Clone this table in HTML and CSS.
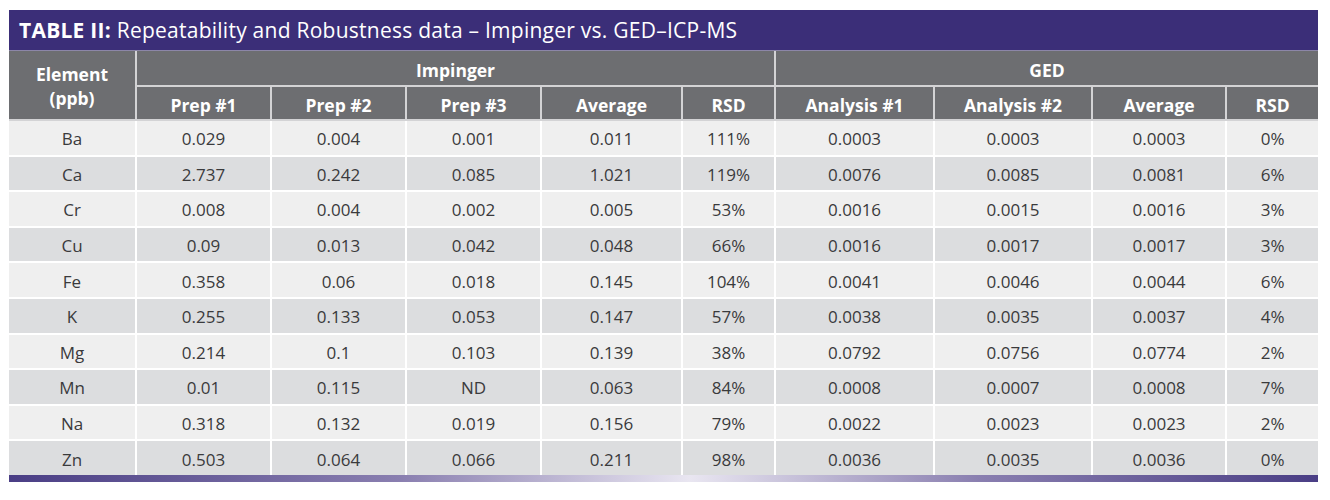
FILE: index.html
```html
<!DOCTYPE html>
<html>
<head>
<meta charset="utf-8">
<link rel="stylesheet" href="styles.css">
</head>
<body>
<div class="wrap">
  <div class="title"><b>TABLE II:</b> Repeatability and Robustness data – Impinger vs. GED–ICP-MS</div>
  <table class="data">
    <colgroup>
      <col class="c-el"><col class="c-p"><col class="c-p"><col class="c-p"><col class="c-avg"><col class="c-rsd">
      <col class="c-an"><col class="c-an2"><col class="c-avg2"><col class="c-rsd2">
    </colgroup>
    <thead>
      <tr class="h1">
        <th rowspan="2" class="el">Element<br>(ppb)</th>
        <th colspan="5">Impinger</th>
        <th colspan="4">GED</th>
      </tr>
      <tr class="h2">
        <th>Prep #1</th><th>Prep #2</th><th>Prep #3</th><th>Average</th><th>RSD</th>
        <th>Analysis #1</th><th>Analysis #2</th><th>Average</th><th>RSD</th>
      </tr>
    </thead>
    <tbody>
      <tr><td>Ba</td><td>0.029</td><td>0.004</td><td>0.001</td><td>0.011</td><td>111%</td><td>0.0003</td><td>0.0003</td><td>0.0003</td><td>0%</td></tr>
      <tr><td>Ca</td><td>2.737</td><td>0.242</td><td>0.085</td><td>1.021</td><td>119%</td><td>0.0076</td><td>0.0085</td><td>0.0081</td><td>6%</td></tr>
      <tr><td>Cr</td><td>0.008</td><td>0.004</td><td>0.002</td><td>0.005</td><td>53%</td><td>0.0016</td><td>0.0015</td><td>0.0016</td><td>3%</td></tr>
      <tr><td>Cu</td><td>0.09</td><td>0.013</td><td>0.042</td><td>0.048</td><td>66%</td><td>0.0016</td><td>0.0017</td><td>0.0017</td><td>3%</td></tr>
      <tr><td>Fe</td><td>0.358</td><td>0.06</td><td>0.018</td><td>0.145</td><td>104%</td><td>0.0041</td><td>0.0046</td><td>0.0044</td><td>6%</td></tr>
      <tr><td>K</td><td>0.255</td><td>0.133</td><td>0.053</td><td>0.147</td><td>57%</td><td>0.0038</td><td>0.0035</td><td>0.0037</td><td>4%</td></tr>
      <tr><td>Mg</td><td>0.214</td><td>0.1</td><td>0.103</td><td>0.139</td><td>38%</td><td>0.0792</td><td>0.0756</td><td>0.0774</td><td>2%</td></tr>
      <tr><td>Mn</td><td>0.01</td><td>0.115</td><td>ND</td><td>0.063</td><td>84%</td><td>0.0008</td><td>0.0007</td><td>0.0008</td><td>7%</td></tr>
      <tr><td>Na</td><td>0.318</td><td>0.132</td><td>0.019</td><td>0.156</td><td>79%</td><td>0.0022</td><td>0.0023</td><td>0.0023</td><td>2%</td></tr>
      <tr><td>Zn</td><td>0.503</td><td>0.064</td><td>0.066</td><td>0.211</td><td>98%</td><td>0.0036</td><td>0.0035</td><td>0.0036</td><td>0%</td></tr>
    </tbody>
  </table>
  <div class="footbar"></div>
</div>
</body>
</html>
```

FILE: styles.css
```css
html, body {
  margin: 0;
  padding: 0;
  background: #ffffff;
}
body {
  font-family: "Open Sans", "Noto Sans", sans-serif;
}
.wrap {
  width: 1309px;
  margin: 10px 0 0 9px;
}
.title {
  height: 41px;
  box-sizing: border-box;
  background: #3b2e78;
  color: #ffffff;
  font-size: 21px;
  letter-spacing: 0.25px;
  line-height: 41px;
  padding-left: 10px;
  border-bottom: 1px solid #8c86a8;
}
.title b {
  font-weight: 700;
}
table.data {
  width: 1309px;
  border-collapse: collapse;
  table-layout: fixed;
}
.c-el { width: 127px; }
.c-p { width: 135px; }
.c-avg { width: 141px; }
.c-rsd { width: 93px; }
.c-an { width: 159px; }
.c-an2 { width: 158px; }
.c-avg2 { width: 134px; }
.c-rsd2 { width: 92px; }

th {
  background: #6d6e71;
  color: #ffffff;
  font-weight: 700;
  font-size: 17.5px;
  border: 2px solid #d3d3d5;
  padding: 0;
  text-align: center;
}
.h1 th { height: 31px; padding-top: 3px; }
.h2 th { height: 29px; padding-top: 3px; }
th.el { line-height: 24px; padding-top: 1px; padding-bottom: 0; }
th:first-child { border-left: none; }
th:last-child { border-right: none; }
.h1 th { border-top: none; }

td {
  font-size: 17px;
  color: #3a3a3c;
  text-align: center;
  padding: 2px 0 0;
  height: 31.6px;
  border: 2px solid #ffffff;
}
td:first-child { border-left: none; }
td:last-child { border-right: none; }
tbody tr:last-child td { border-bottom: none; }
tbody tr:nth-child(odd) td { background: #efefef; }
tbody tr:nth-child(even) td { background: #dcdddf; }

.footbar {
  height: 7px;
  background: linear-gradient(90deg, #4a3e85 0%, #8a7fb0 30%, #e9e6f1 52%, #8a7fb0 74%, #4a3e85 100%);
}
```
